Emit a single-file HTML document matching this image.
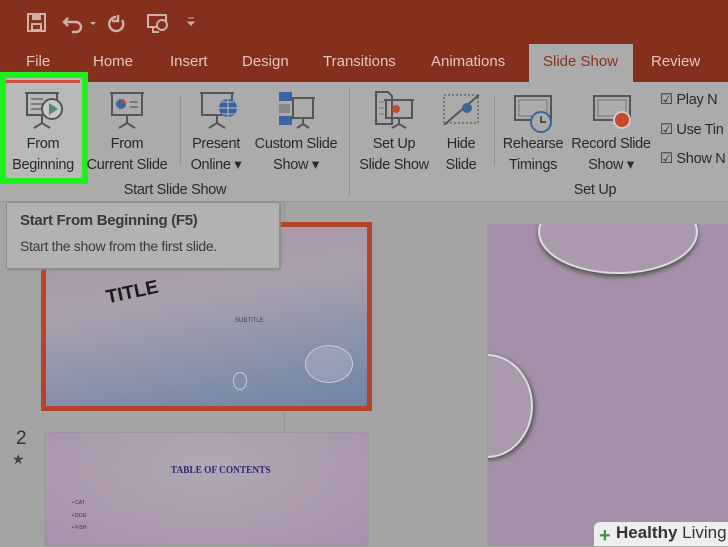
<!DOCTYPE html><html><head><style>
*{margin:0;padding:0;box-sizing:border-box}
body{width:728px;height:546px;overflow:hidden;background:#a4a4a4;font-family:"Liberation Sans",sans-serif;position:relative}
.a{position:absolute}
.top{left:0;top:0;width:728px;height:82px;background:#85301d}
.tab{top:53px;color:#e3c7bf;font-size:15px;white-space:nowrap}
.rib{left:0;top:82px;width:728px;height:120px;background:#ababab;border-bottom:1px solid #999}
.lbl{color:#2a2a2a;font-size:14.5px;text-align:center;line-height:21px;white-space:nowrap;letter-spacing:-0.3px}
.sep{width:1px;background:#949494}
.ic{stroke:#555;fill:none;stroke-width:2}
</style></head><body>
<div class="a top"></div>
<svg class="a" style="left:26px;top:12px" width="180" height="22">
<rect x="2" y="2" width="17" height="17" fill="none" stroke="#cdb1a8" stroke-width="2"/><rect x="6" y="3" width="9" height="5" fill="#cdb1a8"/><rect x="6" y="12" width="9" height="6" fill="none" stroke="#cdb1a8" stroke-width="2"/>
<path d="M42 6 L38 10 L42 14 M38 10 H50 a5 5 0 0 1 0 10 H46" fill="none" stroke="#cdb1a8" stroke-width="2.4"/>
<path d="M64 10 l3 3 l3-3z" fill="#cdb1a8"/>
<path d="M90 5 a7 7 0 1 0 6 3 M92 3 v6 h-6" fill="none" stroke="#cdb1a8" stroke-width="2.4"/>
<rect x="122" y="3" width="18" height="12" fill="none" stroke="#cdb1a8" stroke-width="2"/><circle cx="136" cy="13" r="5" fill="#85301d" stroke="#cdb1a8" stroke-width="2"/><path d="M127 15 v5 h6" stroke="#cdb1a8" stroke-width="2" fill="none"/>
<path d="M162 6 h6 M162 10 l3 3 l3-3z" stroke="#cdb1a8" fill="#cdb1a8"/>
</svg>
<div class="a tab" style="left:26px">File</div>
<div class="a tab" style="left:93px">Home</div>
<div class="a tab" style="left:170px">Insert</div>
<div class="a tab" style="left:242px">Design</div>
<div class="a tab" style="left:323px">Transitions</div>
<div class="a tab" style="left:431px">Animations</div>
<div class="a" style="left:529px;top:44px;width:104px;height:40px;background:#ababab"></div>
<div class="a tab" style="left:543px;color:#8a3220">Slide Show</div>
<div class="a tab" style="left:651px">Review</div>
<div class="a rib"></div>
<div class="a" style="left:0;top:72px;width:88px;height:112px;border:6px solid #1ef01e;background:#b8b8b8"></div>
<div class="a" style="left:6px;top:80px;width:74px;height:3px;background:#c9503a"></div>
<svg class="a" style="left:22px;top:90px" width="46" height="42"><path d="M3 3h34M5 3v22h30V3M20 25v9M12 38l8-5 8 5" class="ic"/><path d="M9 9h12M9 14h12M9 19h10" stroke="#666" stroke-width="1.5"/><circle cx="30" cy="19" r="10" fill="#c7c7c7" stroke="#555" stroke-width="2"/><path d="M27 13v12l9-6z" fill="#4f8c72"/></svg>
<svg class="a" style="left:107px;top:90px" width="40" height="42"><path d="M3 3h34M5 3v22h30V3M20 25v9M12 38l8-5 8 5" class="ic"/><circle cx="14" cy="14" r="5" fill="#3a66a0"/><path d="M14 9a5 5 0 0 1 5 5h-5z" fill="#c04a2a"/><path d="M23 12h8M23 17h8" stroke="#666" stroke-width="1.5"/></svg>
<svg class="a" style="left:197px;top:90px" width="46" height="42"><path d="M3 3h34M5 3v22h30V3M20 25v9M12 38l8-5 8 5" class="ic"/><circle cx="31" cy="18" r="9" fill="#3a66a0"/><path d="M22 18h18M31 9v18M25 12h12M25 24h12" stroke="#bbb" stroke-width="1"/></svg>
<svg class="a" style="left:277px;top:90px" width="40" height="42"><rect x="2" y="2" width="13" height="9" fill="#3a66a0"/><rect x="2" y="14" width="11" height="9" fill="#888"/><rect x="2" y="26" width="13" height="9" fill="#3a66a0"/><path d="M14 8h24M16 8v20h20V8M26 28v7M20 38l6-4 6 4" class="ic"/></svg>
<svg class="a" style="left:374px;top:90px" width="44" height="42"><path d="M2 2h12l4 4v28H2z" class="ic"/><path d="M5 12h5M5 18h5M5 24h5" stroke="#777"/><path d="M10 10h30M12 10v18h26V10M25 28v6M18 38l7-4 7 4" class="ic" fill="#ababab"/><circle cx="22" cy="19" r="4" fill="#c04a2a"/></svg>
<svg class="a" style="left:442px;top:93px" width="40" height="36"><rect x="2" y="2" width="34" height="28" fill="none" stroke="#666" stroke-dasharray="2 2" stroke-width="1.5"/><path d="M2 32L37 2" stroke="#555" stroke-width="2"/><circle cx="25" cy="15" r="5" fill="#3a66a0"/></svg>
<svg class="a" style="left:513px;top:94px" width="44" height="40"><rect x="2" y="2" width="36" height="24" class="ic"/><rect x="6" y="6" width="28" height="16" stroke="#777" fill="none"/><circle cx="28" cy="28" r="10" fill="#ababab" stroke="#3a66a0" stroke-width="2"/><path d="M28 22v6h5" stroke="#333" stroke-width="1.5" fill="none"/></svg>
<svg class="a" style="left:592px;top:94px" width="44" height="40"><rect x="2" y="2" width="36" height="24" class="ic"/><rect x="6" y="6" width="28" height="16" stroke="#777" fill="none"/><circle cx="30" cy="26" r="8" fill="#c84a2e" stroke="#ccc" stroke-width="2"/></svg>
<div class="a lbl" style="left:-6px;top:134px;width:98px">From<br>Beginning</div>
<div class="a lbl" style="left:77px;top:134px;width:100px">From<br>Current Slide</div>
<div class="a sep" style="left:180px;top:96px;height:70px"></div>
<div class="a lbl" style="left:180px;top:134px;width:72px">Present<br>Online ▾</div>
<div class="a lbl" style="left:244px;top:134px;width:104px">Custom Slide<br>Show ▾</div>
<div class="a lbl" style="left:100px;top:180px;width:150px">Start Slide Show</div>
<div class="a sep" style="left:349px;top:88px;height:108px"></div>
<div class="a lbl" style="left:350px;top:134px;width:88px">Set Up<br>Slide Show</div>
<div class="a lbl" style="left:436px;top:134px;width:50px">Hide<br>Slide</div>
<div class="a sep" style="left:494px;top:96px;height:70px"></div>
<div class="a lbl" style="left:494px;top:134px;width:78px">Rehearse<br>Timings</div>
<div class="a lbl" style="left:564px;top:134px;width:94px">Record Slide<br>Show ▾</div>
<div class="a lbl" style="left:560px;top:180px;width:70px">Set Up</div>
<div class="a lbl" style="left:660px;top:86px;text-align:left;line-height:29.5px">☑ Play N<br>☑ Use Tin<br>☑ Show N</div>
<div class="a" style="left:284px;top:203px;width:1px;height:343px;background:#939393"></div>
<div class="a" style="left:41px;top:222px;width:331px;height:189px;background:#b4442c"></div>
<div class="a" style="left:46px;top:227px;width:321px;height:179px;overflow:hidden;background:linear-gradient(170deg,#a893a9 0%,#a9a0ad 40%,#6d85a7 100%)">
<div class="a" style="left:60px;top:55px;font-size:19px;font-weight:bold;color:#1a1a1a;transform:rotate(-12deg)">TITLE</div>
<div class="a" style="left:189px;top:91px;font-size:6px;color:#444">SUBTITLE</div>
<div class="a" style="left:259px;top:118px;width:48px;height:38px;border-radius:50%;border:1px solid #ccc;background:rgba(200,200,220,.3)"></div>
<div class="a" style="left:187px;top:145px;width:14px;height:18px;border-radius:50%;border:1px solid #ccc"></div>
</div>
<div class="a" style="left:16px;top:428px;font-size:19px;color:#333">2</div>
<div class="a" style="left:12px;top:451px;font-size:14px;color:#444">★</div>
<div class="a" style="left:44px;top:432px;width:325px;height:114px;background:radial-gradient(ellipse at 50% 30%,#b0a8b2,#a791ab);border:1px solid #999"></div>
<div class="a" style="left:162px;top:464px;font-family:'Liberation Serif',serif;font-weight:bold;font-size:11px;color:#2b2b6e;transform:scaleX(.85)">TABLE OF CONTENTS</div>
<div class="a" style="left:72px;top:497px;font-size:5px;color:#333;line-height:12.7px">• CAT<br>• DOG<br>• FISH</div>
<div class="a" style="left:487px;top:224px;width:241px;height:322px;background:#a490a8;overflow:hidden;border-left:1px solid #999">
<div class="a" style="left:50px;top:-34px;width:160px;height:84px;border-radius:50%;border:2px solid #ddd;box-shadow:0 3px 4px #555;background:#ab9aae"></div>
<div class="a" style="left:-47px;top:130px;width:92px;height:104px;border-radius:50%;border:2px solid #ddd;box-shadow:2px 2px 4px #555;background:#ab9aae"></div>
</div>
<div class="a" style="left:6px;top:202px;width:274px;height:67px;background:#b2b2b2;border:1px solid #8e8e8e;box-shadow:1px 1px 2px #888"></div>
<div class="a" style="left:20px;top:212px;font-size:15px;font-weight:bold;color:#3a3a3a;letter-spacing:-0.3px">Start From Beginning (F5)</div>
<div class="a" style="left:20px;top:238px;font-size:14px;color:#3a3a3a;letter-spacing:-0.3px">Start the show from the first slide.</div>
<div class="a" style="left:594px;top:522px;width:134px;height:24px;background:#eee;border-radius:6px 0 0 0;font-size:17px;color:#333;padding:1px 0 0 22px;font-weight:bold;white-space:nowrap">Healthy <span style="font-weight:normal">Living</span></div>
<div class="a" style="left:599px;top:527px;color:#3a9a3a;font-size:20px;font-weight:bold;line-height:18px">+</div>
</body></html>
